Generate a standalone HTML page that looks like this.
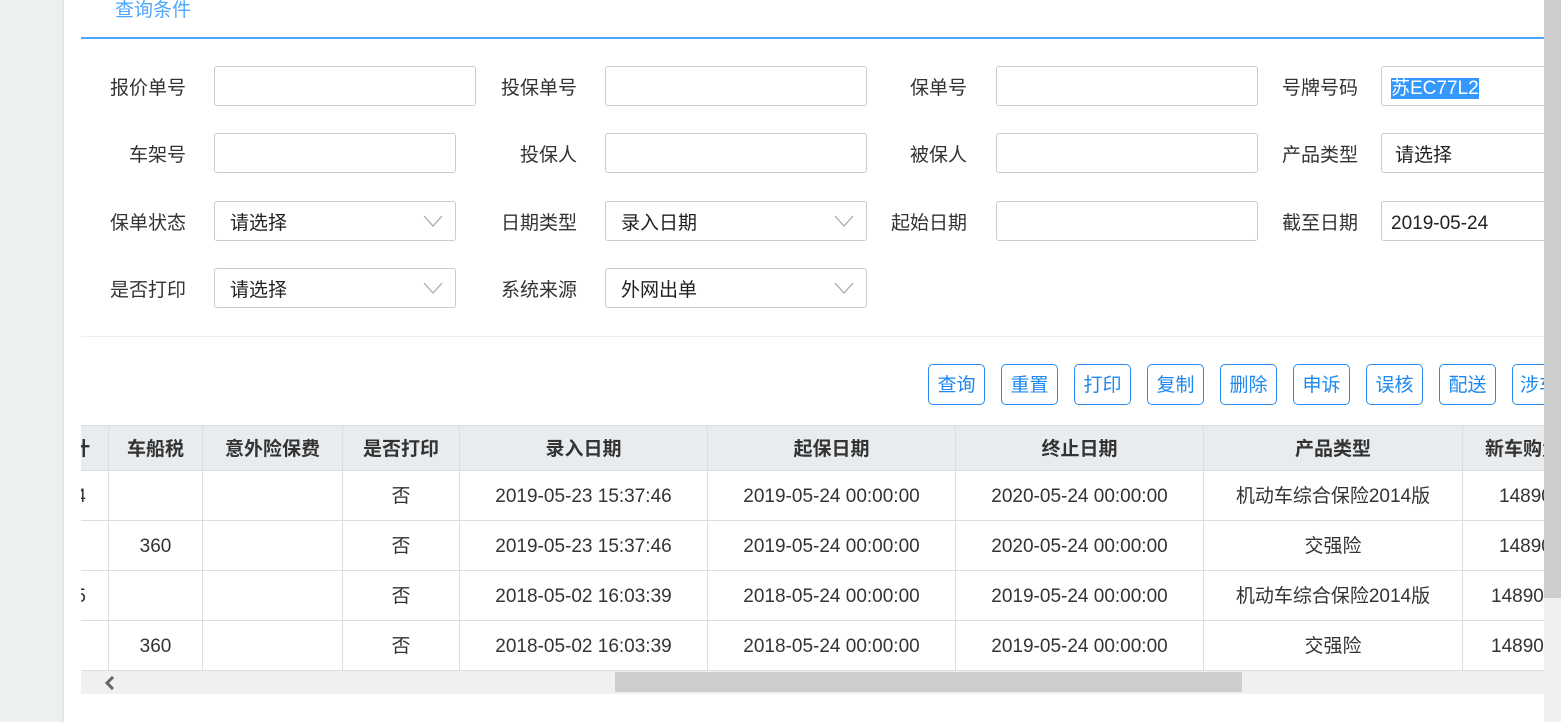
<!DOCTYPE html>
<html><head><meta charset="utf-8"><style>
*{box-sizing:border-box;margin:0;padding:0}
body{width:1561px;height:722px;overflow:hidden;background:#fff;font-family:"Liberation Sans","Noto Sans CJK SC",sans-serif;position:relative;color:#333}
.a{position:absolute}
.lbl{position:absolute;font-size:19px;color:#333;text-align:right;width:120px;line-height:45px}
.in{position:absolute;height:40px;border:1px solid #ccc;border-radius:3px;background:#fff;font-size:19px;line-height:43px;padding-left:15px;color:#222}
.chev{position:absolute;right:12px;top:12px}
.btn{position:absolute;top:364px;height:41px;width:57px;border:1.5px solid #2a8cf0;border-radius:5px;color:#1e88f0;font-size:19px;line-height:42px;text-align:center;background:#fff;overflow:hidden;white-space:nowrap}
.th,.td{position:absolute;text-align:center;font-size:19px;border-right:1px solid #ddd;border-bottom:1px solid #ddd;overflow:hidden;white-space:nowrap}
.th{top:426px;height:45px;line-height:47px;background:#e8ecef;font-weight:bold;color:#333}
.td{height:50px;line-height:52px;color:#333}
</style></head><body>
<div class="a" style="left:0;top:0;width:62px;height:722px;background:#edf0f1"></div>
<div class="a" style="left:62px;top:0;width:2px;height:722px;background:#e4e6e8"></div>
<div class="a" style="left:115px;top:-5px;font-size:19px;color:#4da6ff">查询条件</div>
<div class="a" style="left:81px;top:37px;width:1463px;height:2px;background:#4da6ff"></div>

<div class="lbl" style="left:66px;top:66px">报价单号</div><div class="in" style="left:214px;top:66px;width:262px"></div>
<div class="lbl" style="left:457px;top:66px">投保单号</div><div class="in" style="left:605px;top:66px;width:262px"></div>
<div class="lbl" style="left:847px;top:66px">保单号</div><div class="in" style="left:996px;top:66px;width:262px"></div>
<div class="lbl" style="left:1238px;top:66px">号牌号码</div><div class="in" style="left:1381px;top:66px;width:180px;padding-left:9px"><span style="background:#3399ff;color:#fff">苏EC77L2</span></div>

<div class="lbl" style="left:66px;top:133px">车架号</div><div class="in" style="left:214px;top:133px;width:242px"></div>
<div class="lbl" style="left:457px;top:133px">投保人</div><div class="in" style="left:605px;top:133px;width:262px"></div>
<div class="lbl" style="left:847px;top:133px">被保人</div><div class="in" style="left:996px;top:133px;width:262px"></div>
<div class="lbl" style="left:1238px;top:133px">产品类型</div><div class="in" style="left:1381px;top:133px;width:180px;padding-left:13px">请选择</div>

<div class="lbl" style="left:66px;top:201px">保单状态</div><div class="in" style="left:214px;top:201px;width:242px">请选择<svg class="chev" width="20" height="14"><path d="M1 2 L10 12 L19 2" fill="none" stroke="#aaa" stroke-width="1.3"/></svg></div>
<div class="lbl" style="left:457px;top:201px">日期类型</div><div class="in" style="left:605px;top:201px;width:262px">录入日期<svg class="chev" width="20" height="14"><path d="M1 2 L10 12 L19 2" fill="none" stroke="#aaa" stroke-width="1.3"/></svg></div>
<div class="lbl" style="left:847px;top:201px">起始日期</div><div class="in" style="left:996px;top:201px;width:262px"></div>
<div class="lbl" style="left:1238px;top:201px">截至日期</div><div class="in" style="left:1381px;top:201px;width:180px;padding-left:9px">2019-05-24</div>

<div class="lbl" style="left:66px;top:268px">是否打印</div><div class="in" style="left:214px;top:268px;width:242px">请选择<svg class="chev" width="20" height="14"><path d="M1 2 L10 12 L19 2" fill="none" stroke="#aaa" stroke-width="1.3"/></svg></div>
<div class="lbl" style="left:457px;top:268px">系统来源</div><div class="in" style="left:605px;top:268px;width:262px">外网出单<svg class="chev" width="20" height="14"><path d="M1 2 L10 12 L19 2" fill="none" stroke="#aaa" stroke-width="1.3"/></svg></div>

<div class="a" style="left:81px;top:336px;width:1463px;height:1px;background:#eee"></div>

<div class="btn" style="left:928px">查询</div>
<div class="btn" style="left:1001px">重置</div>
<div class="btn" style="left:1074px">打印</div>
<div class="btn" style="left:1147px">复制</div>
<div class="btn" style="left:1220px">删除</div>
<div class="btn" style="left:1293px">申诉</div>
<div class="btn" style="left:1366px">误核</div>
<div class="btn" style="left:1439px">配送</div>
<div class="btn" style="left:1512px;text-align:left;padding-left:7px">涉车</div>

<div class="a" style="left:81px;top:425px;width:1463px;height:1px;background:#ddd"></div>
<div class="th" style="left:31px;width:78px;text-align:right;padding-right:18px">合计</div>
<div class="th" style="left:109px;width:94px">车船税</div>
<div class="th" style="left:203px;width:140px">意外险保费</div>
<div class="th" style="left:343px;width:117px">是否打印</div>
<div class="th" style="left:460px;width:248px">录入日期</div>
<div class="th" style="left:708px;width:248px">起保日期</div>
<div class="th" style="left:956px;width:248px">终止日期</div>
<div class="th" style="left:1204px;width:259px">产品类型</div>
<div class="th" style="left:1463px;width:120px;text-align:left;padding-left:22px">新车购置价</div>

<div class="td" style="left:31px;top:471px;width:78px;text-align:right;padding-right:22px">4</div>
<div class="td" style="left:109px;top:471px;width:94px"></div>
<div class="td" style="left:203px;top:471px;width:140px"></div>
<div class="td" style="left:343px;top:471px;width:117px">否</div>
<div class="td" style="left:460px;top:471px;width:248px">2019-05-23 15:37:46</div>
<div class="td" style="left:708px;top:471px;width:248px">2019-05-24 00:00:00</div>
<div class="td" style="left:956px;top:471px;width:248px">2020-05-24 00:00:00</div>
<div class="td" style="left:1204px;top:471px;width:259px">机动车综合保险2014版</div>
<div class="td" style="left:1463px;top:471px;width:120px;text-align:left;padding-left:36px">14890</div>

<div class="td" style="left:31px;top:521px;width:78px"></div>
<div class="td" style="left:109px;top:521px;width:94px">360</div>
<div class="td" style="left:203px;top:521px;width:140px"></div>
<div class="td" style="left:343px;top:521px;width:117px">否</div>
<div class="td" style="left:460px;top:521px;width:248px">2019-05-23 15:37:46</div>
<div class="td" style="left:708px;top:521px;width:248px">2019-05-24 00:00:00</div>
<div class="td" style="left:956px;top:521px;width:248px">2020-05-24 00:00:00</div>
<div class="td" style="left:1204px;top:521px;width:259px">交强险</div>
<div class="td" style="left:1463px;top:521px;width:120px;text-align:left;padding-left:36px">14890</div>

<div class="td" style="left:31px;top:571px;width:78px;text-align:right;padding-right:22px">5</div>
<div class="td" style="left:109px;top:571px;width:94px"></div>
<div class="td" style="left:203px;top:571px;width:140px"></div>
<div class="td" style="left:343px;top:571px;width:117px">否</div>
<div class="td" style="left:460px;top:571px;width:248px">2018-05-02 16:03:39</div>
<div class="td" style="left:708px;top:571px;width:248px">2018-05-24 00:00:00</div>
<div class="td" style="left:956px;top:571px;width:248px">2019-05-24 00:00:00</div>
<div class="td" style="left:1204px;top:571px;width:259px">机动车综合保险2014版</div>
<div class="td" style="left:1463px;top:571px;width:120px;text-align:left;padding-left:28px">14890</div>

<div class="td" style="left:31px;top:621px;width:78px"></div>
<div class="td" style="left:109px;top:621px;width:94px">360</div>
<div class="td" style="left:203px;top:621px;width:140px"></div>
<div class="td" style="left:343px;top:621px;width:117px">否</div>
<div class="td" style="left:460px;top:621px;width:248px">2018-05-02 16:03:39</div>
<div class="td" style="left:708px;top:621px;width:248px">2018-05-24 00:00:00</div>
<div class="td" style="left:956px;top:621px;width:248px">2019-05-24 00:00:00</div>
<div class="td" style="left:1204px;top:621px;width:259px">交强险</div>
<div class="td" style="left:1463px;top:621px;width:120px;text-align:left;padding-left:28px">14890</div>

<div class="a" style="left:0;top:420px;width:62px;height:302px;background:#edf0f1"></div>
<div class="a" style="left:62px;top:420px;width:2px;height:302px;background:#e4e6e8"></div>
<div class="a" style="left:64px;top:420px;width:17px;height:302px;background:#fff"></div>

<div class="a" style="left:81px;top:671px;width:1463px;height:23px;background:#f0f0f0"></div>
<div class="a" style="left:615px;top:672px;width:627px;height:20px;background:#cdcdcd"></div>
<svg class="a" style="left:103px;top:676px" width="14" height="14"><path d="M10 1 L4 7 L10 13" fill="none" stroke="#666" stroke-width="3"/></svg>

<div class="a" style="left:1544px;top:0;width:17px;height:722px;background:#f0f0f0"></div>
<div class="a" style="left:1544px;top:0;width:17px;height:598px;background:#cdcdcd"></div>
</body></html>
